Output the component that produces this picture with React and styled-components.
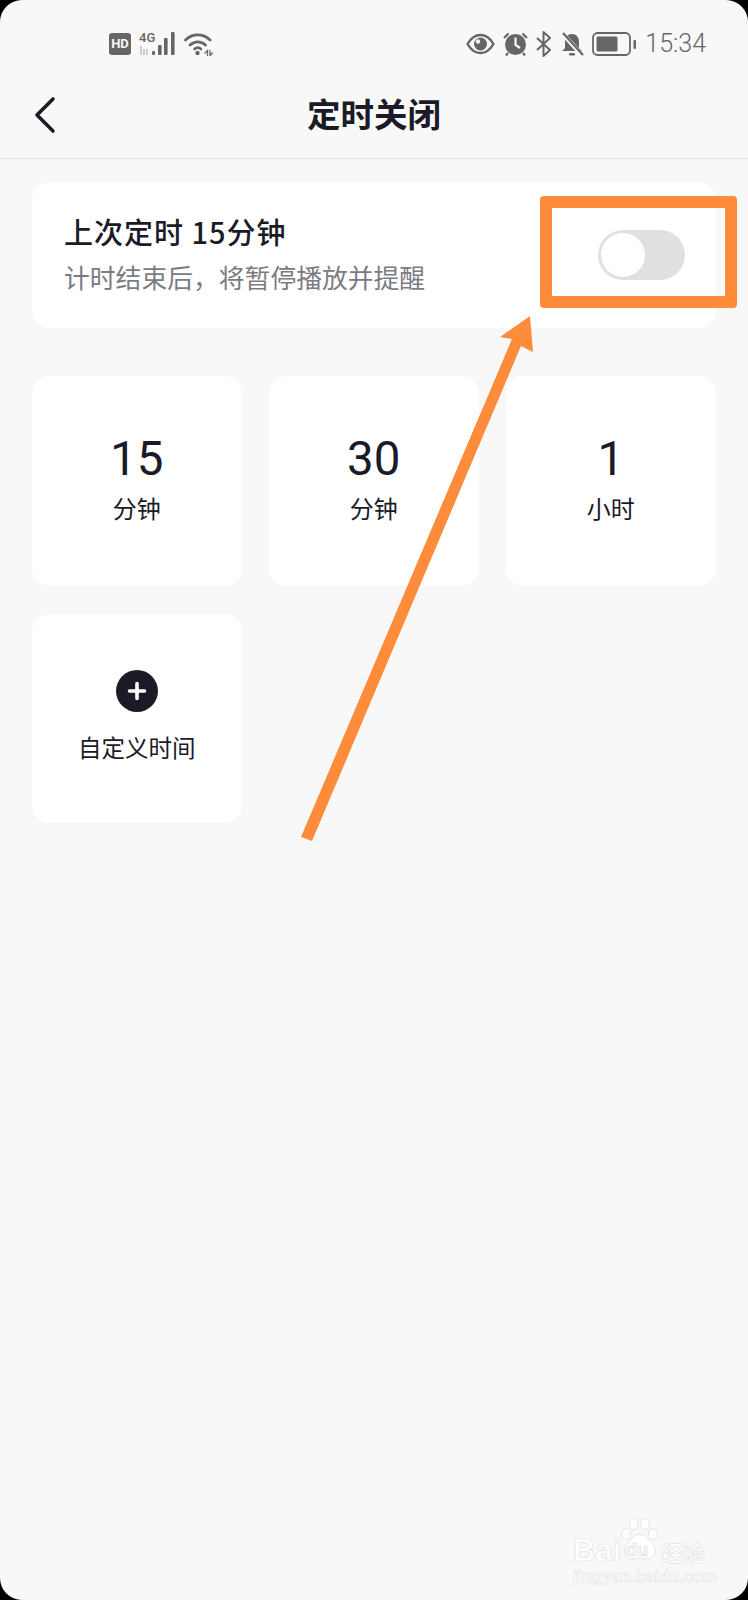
import styled, { createGlobalStyle } from "styled-components";

const GlobalStyle = createGlobalStyle`
  html, body {
    margin: 0;
    padding: 0;
    background: #000;
  }
  * {
    box-sizing: border-box;
  }
`;

const CJK = `"Noto Sans CJK SC", "Noto Sans", sans-serif`;
const ORANGE = "#ff8c3b";
const INK = "#1a1b26";
const ICON_GREY = "#666666";

const Screen = styled.div`
  position: relative;
  width: 748px;
  height: 1600px;
  overflow: hidden;
  border-radius: 22px;
  background: #f8f8f8;
  font-family: ${CJK};
  color: ${INK};
`;

const StatusBar = styled.div`
  height: 75px;
  padding: 30px 42px 0 109px;
  display: flex;
  justify-content: space-between;
  align-items: flex-start;
  color: ${ICON_GREY};
`;
const StatusGroup = styled.div`
  display: flex;
  align-items: center;
  gap: 8px;
  height: 28px;
`;
const HdBadge = styled.span`
  width: 22px;
  height: 22px;
  border-radius: 3px;
  background: ${ICON_GREY};
  color: #f8f8f8;
  font-family: "Roboto", sans-serif;
  font-size: 13px;
  font-weight: 700;
  line-height: 22px;
  text-align: center;
`;
const SignalWrap = styled.div`
  position: relative;
  width: 37px;
  height: 24px;
`;
const NetType = styled.span`
  position: absolute;
  left: 0;
  top: -1px;
  font-family: "Roboto", sans-serif;
  font-size: 13px;
  font-weight: 500;
  line-height: 13px;
`;
const Clock = styled.span`
  font-family: "Roboto", sans-serif;
  font-size: 25px;
  font-weight: 300;
  line-height: 28px;
`;

const Header = styled.header`
  height: 84px;
  padding: 0 34px 3px;
  display: grid;
  grid-template-columns: 1fr auto 1fr;
  align-items: center;
  border-bottom: 1px solid #dfdfdf;
`;
const BackIcon = styled.svg`
  display: block;
  width: 22px;
  height: 38px;
`;
const Title = styled.h1`
  margin: -4px 0 0;
  font-size: 33.5px;
  font-weight: 700;
  line-height: 44px;
`;

const Content = styled.main`
  padding: 23px 32px 0;
`;
const TimerCard = styled.section`
  height: 146px;
  padding: 0 31px 0 32px;
  display: flex;
  align-items: center;
  justify-content: space-between;
  background: #fff;
  border-radius: 18px;
`;
const CardText = styled.div`
  padding-bottom: 4px;
`;
const CardTitle = styled.div`
  font-size: 29px;
  font-weight: 500;
  line-height: 40px;
  letter-spacing: 1px;
`;
const CardHint = styled.div`
  margin-top: 8px;
  font-size: 25.8px;
  line-height: 36px;
  color: #7b7c82;
`;
const Toggle = styled.div`
  position: relative;
  width: 87px;
  height: 50px;
  border-radius: 25px;
  background: #dfe1e0;
`;
const Knob = styled.span`
  position: absolute;
  left: 3px;
  top: 3px;
  width: 44px;
  height: 44px;
  border-radius: 50%;
  background: #fff;
`;

const TileGrid = styled.div`
  margin-top: 48px;
  display: grid;
  grid-template-columns: repeat(3, 209.5px);
  grid-auto-rows: 209.5px;
  gap: 28px 27.5px;
`;
const Tile = styled.button`
  padding: 0 0 5px;
  border: 0;
  border-radius: 18px;
  background: #fff;
  color: ${INK};
  font-family: ${CJK};
  display: flex;
  flex-direction: column;
  align-items: center;
  justify-content: center;
`;
const TileNumber = styled.span`
  font-family: "Roboto", sans-serif;
  font-size: 47.5px;
  font-weight: 450;
  line-height: 54px;
`;
const TileUnit = styled.span`
  margin-top: 5px;
  font-size: 24px;
  line-height: 34px;
`;
const AddIcon = styled.svg`
  display: block;
  width: 42px;
  height: 42px;
  margin-top: 3px;
`;
const TileLabel = styled.span`
  margin-top: 18px;
  font-size: 23.5px;
  line-height: 34px;
`;

/* annotation drawn over the screenshot */
const Highlight = styled.div`
  position: absolute;
  left: 540px;
  top: 196px;
  width: 197px;
  height: 112px;
  border: 12px solid ${ORANGE};
  border-radius: 4px;
`;
const ArrowLayer = styled.svg`
  position: absolute;
  left: 0;
  top: 0;
  pointer-events: none;
`;

const Watermark = styled.div`
  position: absolute;
  left: 573px;
  top: 1518px;
  width: 140px;
  height: 68px;
  color: #fff;
  -webkit-text-stroke: 0.7px #e4e4e4;
`;
const WatermarkBai = styled.span`
  position: absolute;
  left: 0;
  top: 17px;
  font-family: "Liberation Sans", sans-serif;
  font-size: 31px;
  font-weight: 700;
  line-height: 32px;
`;
const WatermarkDu = styled.span`
  position: absolute;
  left: 53px;
  top: 22px;
  font-family: "Liberation Sans", sans-serif;
  font-size: 18px;
  font-weight: 700;
  line-height: 20px;
  color: #f8f8f8;
  -webkit-text-stroke: 0.6px #dcdcdc;
`;
const WatermarkJing = styled.span`
  position: absolute;
  left: 88px;
  top: 19px;
  font-size: 22px;
  font-weight: 700;
  line-height: 28px;
`;
const WatermarkUrl = styled.span`
  position: absolute;
  left: 0;
  top: 48px;
  font-family: "Liberation Sans", sans-serif;
  font-size: 16.5px;
  font-weight: 700;
  line-height: 20px;
`;
const PawIcon = styled.svg`
  position: absolute;
  left: 47px;
  top: 0;
`;

const SignalIcon = () => (
  <svg width="37" height="24" viewBox="0 0 37 24" style={{ position: "absolute", left: 0, top: 0 }}>
    <path d="M1 15h2M2 15v8M5 17v6M8 17v6" stroke="#c4c4c4" strokeWidth="1.6" fill="none" />
    <g fill="#666">
      <rect x="13" y="19" width="3" height="4" rx="1" />
      <rect x="19" y="13" width="3.600" height="10" rx="1" />
      <rect x="25" y="6" width="3.600" height="17" rx="1" />
      <rect x="32" y="0" width="3.600" height="23" rx="1" />
    </g>
  </svg>
);

const WifiIcon = () => (
  <svg width="29" height="24" viewBox="0 0 29 24" fill="none" stroke="#666" strokeLinecap="round">
    <path d="M1.500 8C8.500 1.200 19 1.200 26 8" strokeWidth="2.800" />
    <path d="M6 13c4.600-4.300 11-4.300 15.500 0" strokeWidth="2.800" />
    <path d="M10.500 17c2-1.800 4.500-1.800 6.500 0" strokeWidth="2.600" />
    <circle cx="13.500" cy="21" r="2.200" fill="#666" stroke="none" />
    <path d="M21 21l2.500-2.500V23.500M26 18.500V23.500l2.500-2.500" strokeWidth="1.300" />
  </svg>
);

const EyeIcon = () => (
  <svg width="29" height="22" viewBox="0 0 29 22">
    <path d="M1.500 11C5 5 9.500 2 14.500 2S24 5 27.500 11C24 17 19.500 20 14.500 20S5 17 1.500 11Z" fill="none" stroke="#666" strokeWidth="2.400" />
    <circle cx="14.500" cy="11" r="6.500" fill="#666" />
    <circle cx="12" cy="8.500" r="2.200" fill="#f8f8f8" />
  </svg>
);

const AlarmIcon = () => (
  <svg width="25" height="24" viewBox="0 0 25 24">
    <circle cx="12.500" cy="12.500" r="10.500" fill="#666" />
    <path d="M12.500 5.500v7.500l4.500 3" stroke="#f8f8f8" strokeWidth="2.200" fill="none" />
    <path d="M1 6l4.500-4.500M24 6l-4.500-4.500M5 21l-2 2.500M20 21l2 2.500" stroke="#666" strokeWidth="2.200" fill="none" />
  </svg>
);

const BluetoothIcon = () => (
  <svg width="16" height="26" viewBox="0 0 16 26" fill="none" stroke="#666" strokeWidth="2" strokeLinejoin="round">
    <path d="M1 7l13 12-6.500 6V1L14 7 1 19" />
  </svg>
);

const MutedBellIcon = () => (
  <svg width="24" height="24" viewBox="0 0 24 24">
    <path d="M12 2c-4.500 0-7 3.500-7 8v6l-3 3h20l-3-3v-6c0-4.500-2.500-8-7-8Z" fill="#666" />
    <rect x="9" y="21" width="6" height="2.400" rx="1.200" fill="#666" />
    <path d="M2 1l20 22" stroke="#f8f8f8" strokeWidth="4.500" />
    <path d="M3 1l20 22" stroke="#666" strokeWidth="2.200" />
  </svg>
);

const BatteryIcon = () => (
  <svg width="45" height="24" viewBox="0 0 45 24">
    <rect x="1" y="1" width="37" height="22" rx="4.500" fill="none" stroke="#666" strokeWidth="1.800" />
    <rect x="4.500" y="4.500" width="21" height="15" rx="1.500" fill="#666" />
    <rect x="41.500" y="8" width="2.500" height="9" rx="1" fill="#666" />
  </svg>
);

const App = () => (
  <Screen>
    <GlobalStyle />
    <StatusBar>
      <StatusGroup>
        <HdBadge>HD</HdBadge>
        <SignalWrap>
          <NetType>4G</NetType>
          <SignalIcon />
        </SignalWrap>
        <WifiIcon />
      </StatusGroup>
      <StatusGroup>
        <EyeIcon />
        <AlarmIcon />
        <BluetoothIcon />
        <MutedBellIcon />
        <BatteryIcon />
        <Clock>15:34</Clock>
      </StatusGroup>
    </StatusBar>
    <Header>
      <BackIcon viewBox="0 0 22 38" fill="none">
        <path d="M19 3L3 19l16 16" stroke={INK} strokeWidth="3.600" strokeLinecap="round" strokeLinejoin="round" />
      </BackIcon>
      <Title>定时关闭</Title>
    </Header>
    <Content>
      <TimerCard>
        <CardText>
          <CardTitle>上次定时 15分钟</CardTitle>
          <CardHint>计时结束后，将暂停播放并提醒</CardHint>
        </CardText>
        <Toggle>
          <Knob />
        </Toggle>
      </TimerCard>
      <TileGrid>
        <Tile>
          <TileNumber>15</TileNumber>
          <TileUnit>分钟</TileUnit>
        </Tile>
        <Tile>
          <TileNumber>30</TileNumber>
          <TileUnit>分钟</TileUnit>
        </Tile>
        <Tile>
          <TileNumber>1</TileNumber>
          <TileUnit>小时</TileUnit>
        </Tile>
        <Tile>
          <AddIcon viewBox="0 0 42 42">
            <circle cx="21" cy="21" r="21" fill={INK} />
            <path d="M21 13.500v15M13.500 21h15" stroke="#fff" strokeWidth="3.600" strokeLinecap="round" />
          </AddIcon>
          <TileLabel>自定义时间</TileLabel>
        </Tile>
      </TileGrid>
    </Content>

    <Highlight />
    <ArrowLayer width="748" height="1600" viewBox="0 0 748 1600">
      <path d="M530 316L533 352 521 346 312 841 301 837 512 339 500 337Z" fill={ORANGE} />
    </ArrowLayer>

    <Watermark>
      <WatermarkBai>Bai</WatermarkBai>
      <PawIcon width="40" height="44" viewBox="0 0 40 44" fill="#fff" stroke="#e4e4e4">
        <ellipse cx="6" cy="16" rx="4.500" ry="5.500" />
        <ellipse cx="14" cy="6" rx="4.500" ry="5.500" />
        <ellipse cx="25" cy="6" rx="4.500" ry="5.500" />
        <ellipse cx="33" cy="16" rx="4.500" ry="5.500" />
        <path d="M20 16c6 0 8 6 13 10 5 5 2 15-6 15-3 0-5-1-7-1s-4 1-7 1C5 41 2 31 7 26c5-4 7-10 13-10Z" />
      </PawIcon>
      <WatermarkDu>du</WatermarkDu>
      <WatermarkJing>经验</WatermarkJing>
      <WatermarkUrl>jingyan.baidu.com</WatermarkUrl>
    </Watermark>
  </Screen>
);

export default App;
